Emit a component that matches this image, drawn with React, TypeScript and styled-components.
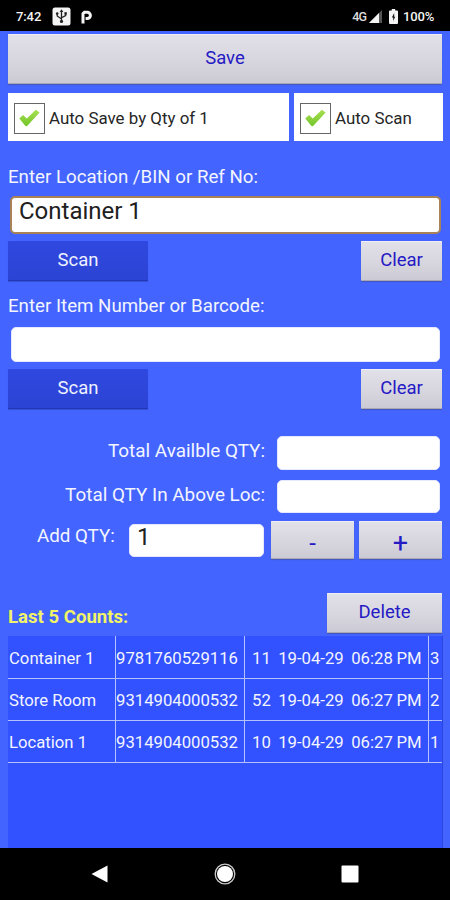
import React from "react";
import styled, { createGlobalStyle } from "styled-components";

const Global = createGlobalStyle`
  *, *::before, *::after { box-sizing: border-box; }
  html, body { margin: 0; padding: 0; background: #4364ff; }
  body { font-family: Roboto, sans-serif; color: #f3f5ff; overflow: hidden; }
`;

const Screen = styled.div`
  width: 450px;
  height: 900px;
  display: flex;
  flex-direction: column;
  background: #4364ff;
`;

const StatusBar = styled.header`
  height: 31px;
  flex: none;
  display: flex;
  align-items: center;
  justify-content: space-between;
  padding: 2px 15px 0 16px;
  background: #000;
  color: #f4f4f4;
  font-size: 13px;
  line-height: 16px;
`;

const StatusGroup = styled.div<{ $gap: number }>`
  display: flex;
  align-items: center;
  gap: ${(p) => p.$gap}px;
`;

const Clock = styled.span`
  width: 26px;
  font-weight: 500;
  letter-spacing: -0.1px;
  white-space: nowrap;
`;

const Network = styled.span`
  font-size: 12.5px;
  font-weight: 500;
  letter-spacing: -0.9px;
  color: #ddd;
  margin-right: 1px;
`;

const Battery = styled.span`
  width: 32px;
  font-weight: 500;
  letter-spacing: -0.1px;
  margin-left: 1px;
`;

const Main = styled.main`
  height: 817px;
  flex: none;
  display: flex;
  flex-direction: column;
  padding: 3px 7px 0 8px;
`;

const Button = styled.button<{ $w: number; $h: number; $primary?: boolean; $size?: number; $drop?: number }>`
  width: ${(p) => p.$w}px;
  height: ${(p) => p.$h}px;
  flex: none;
  border: 0;
  border-radius: 1px;
  padding: ${(p) => p.$drop ?? 0}px 0 ${(p) => (p.$drop ? 0 : 2)}px;
  font-family: inherit;
  font-size: ${(p) => p.$size ?? 18.5}px;
  line-height: 22px;
  color: ${(p) => (p.$primary ? "#eef1ff" : "#2519c4")};
  background: ${(p) =>
    p.$primary
      ? "linear-gradient(#3048df, #2b44d4)"
      : "linear-gradient(#e2e1ea, #d6d5de 60%, #cbcad4)"};
  box-shadow: ${(p) =>
    p.$primary
      ? "inset 0 -1px 0 #2236b4, 0 1px 1px rgba(30, 50, 160, 0.4)"
      : "inset 0 1px 0 #efeef6, inset 0 -1px 0 #a9a7b4, 0 1px 1px rgba(70, 70, 100, 0.45)"};
`;

const CheckRow = styled.div`
  display: flex;
  gap: 5px;
  margin-top: 9px;
`;

const CheckCard = styled.label<{ $w: number }>`
  width: ${(p) => p.$w}px;
  height: 48px;
  display: flex;
  align-items: center;
  gap: 4px;
  padding: 2px 0 0 6px;
  background: #fff;
  color: #262626;
  font-size: 16.9px;
  white-space: nowrap;
`;

const CheckBox = styled.span`
  width: 31px;
  height: 31px;
  flex: none;
  display: flex;
  align-items: center;
  justify-content: center;
  border: 1px solid #666;
  background: #fff;
`;

const Label = styled.div<{ $top: number }>`
  height: 22px;
  margin-top: ${(p) => p.$top}px;
  font-size: 18.7px;
  line-height: 22px;
  white-space: nowrap;
`;

const Field = styled.input<{ $w: number; $h: number; $active?: boolean }>`
  width: ${(p) => p.$w}px;
  height: ${(p) => p.$h}px;
  flex: none;
  display: block;
  border: ${(p) => (p.$active ? "2px solid #a98258" : "1px solid #e5e8ff")};
  border-radius: 5px;
  padding: 0 7px ${(p) => (p.$active ? 8 : 6)}px;
  background: #fff;
  color: #202020;
  font-family: inherit;
  font-size: 24px;
  line-height: 26px;
  outline: none;
`;

const FieldWrap = styled.div<{ $top: number; $left: number }>`
  padding-left: ${(p) => p.$left}px;
  margin-top: ${(p) => p.$top}px;
`;

const ActionRow = styled.div<{ $top: number }>`
  display: flex;
  justify-content: space-between;
  margin-top: ${(p) => p.$top}px;
  padding-right: 1px;
`;

const QtyRow = styled.div<{ $top: number }>`
  display: flex;
  align-items: center;
  justify-content: flex-end;
  gap: 12px;
  margin-top: ${(p) => p.$top}px;
  padding-right: 3px;
  font-size: 18.9px;
  line-height: 22px;
`;

const QtyLabel = styled.span`
  padding-bottom: 4px;
  white-space: nowrap;
`;

const AddRow = styled.div`
  display: flex;
  align-items: center;
  margin-top: 8px;
  padding-left: 29px;
  font-size: 18.8px;
  line-height: 22px;
`;

const AddLabel = styled.span`
  width: 92px;
  padding-bottom: 8px;
  white-space: nowrap;
`;

const Stepper = styled.div`
  display: flex;
  gap: 5px;
  margin-left: 7px;
`;

const CountsHead = styled.div`
  display: flex;
  justify-content: space-between;
  align-items: flex-end;
  margin-top: 34px;
  padding-right: 1px;
`;

const CountsTitle = styled.h2`
  margin: 0 0 5px;
  font-size: 18.6px;
  line-height: 22px;
  font-weight: 700;
  color: #f1f466;
`;

const CountsPanel = styled.section`
  flex: 1;
  margin-top: 3px;
  background: #3251ff;
  border-right: 1px solid #2b46dc;
`;

const CountsRow = styled.div`
  display: grid;
  grid-template-columns: 107px 129px 184px 14px;
  height: 42px;
  border-bottom: 1px solid #b4c2ff;
  font-size: 16.7px;
  line-height: 20px;

  &:first-child {
    height: 43px;
  }
`;

const Cell = styled.div<{ $left: number; $line?: boolean; $word?: number }>`
  display: flex;
  align-items: center;
  padding: 3px 0 0 ${(p) => p.$left}px;
  border-left: ${(p) => (p.$line ? "1px solid #b4c2ff" : "0")};
  word-spacing: ${(p) => p.$word ?? 0}px;
  white-space: pre;
`;

const NavBar = styled.footer`
  height: 52px;
  flex: none;
  display: flex;
  align-items: center;
  justify-content: space-between;
  padding: 0 91px;
  background: #000;
`;

const UsbIcon = () => (
  <svg width="19" height="19" viewBox="0 0 19 19">
    <rect x="0.5" y="0.5" width="18" height="18" rx="2.5" fill="#f4f4f4" />
    <path d="M9.5 3.5V14M9.5 12L5.2 9V6.5M9.5 10.8L13.6 8.5V6" fill="none" stroke="#222" strokeWidth="1.3" />
    <path d="M7.7 5L9.5 2.2 11.3 5z" fill="#222" />
    <circle cx="5.2" cy="6.6" r="1.3" fill="#222" />
    <rect x="12.4" y="5.2" width="2.4" height="2.4" fill="#222" />
    <circle cx="9.5" cy="14.4" r="1.6" fill="#222" />
  </svg>
);

const ParkingIcon = () => (
  <svg width="12" height="14" viewBox="0 0 12 14">
    <path d="M2 13.5V3.6L3.4 2.3H6.3A3.1 3.1 0 0 1 6.3 8.5H4.6" fill="none" stroke="#f4f4f4" strokeWidth="3" />
  </svg>
);

const SignalIcon = () => (
  <svg width="13" height="13" viewBox="0 0 13 13">
    <path d="M0 13L13 0V13z" fill="#555" />
    <path d="M0 13L10 3V13z" fill="#f4f4f4" />
  </svg>
);

const BatteryIcon = () => (
  <svg width="9" height="15" viewBox="0 0 9 15">
    <path d="M2.8 0H6.2V1.5H8Q9 1.5 9 2.5V14Q9 15 8 15H1Q0 15 0 14V2.5Q0 1.5 1 1.5H2.8z" fill="#f4f4f4" />
    <path d="M5.2 4L2.9 8.6H4.2V12L6.2 7.8H5.2z" fill="#111" />
  </svg>
);

const TickIcon = () => (
  <svg width="21" height="18" viewBox="0 0 21 18">
    <defs>
      <linearGradient id="tick" x1="0" y1="0" x2="0" y2="1">
        <stop offset="0" stopColor="#a8df50" />
        <stop offset="1" stopColor="#73c62c" />
      </linearGradient>
    </defs>
    <path d="M0.3 9.6L4 6L7.8 9.4L16.8 0.8L20.6 3.6L8.6 16.6Q7.2 17.8 6 16.6Z" fill="url(#tick)" />
  </svg>
);

const BackIcon = () => (
  <svg width="17" height="18" viewBox="0 0 17 18">
    <path d="M0.5 9L16.5 0.5V17.5z" fill="#fff" />
  </svg>
);

const HomeIcon = () => (
  <svg width="22" height="22" viewBox="0 0 22 22">
    <circle cx="11" cy="11" r="9.8" fill="none" stroke="#ccc" strokeWidth="1.3" />
    <circle cx="11" cy="11" r="8" fill="#fff" />
  </svg>
);

const RecentIcon = () => (
  <svg width="18" height="18" viewBox="0 0 18 18">
    <rect x="0.5" y="0.5" width="17" height="17" rx="1" fill="#fff" />
  </svg>
);

const COUNTS = [
  { place: "Container 1", code: "9781760529116", qty: "11", date: "19-04-29", time: "06:28 PM", id: "3" },
  { place: "Store Room", code: "9314904000532", qty: "52", date: "19-04-29", time: "06:27 PM", id: "2" },
  { place: "Location 1", code: "9314904000532", qty: "10", date: "19-04-29", time: "06:27 PM", id: "1" },
];

export default function App() {
  return (
    <>
      <Global />
      <Screen>
        <StatusBar>
          <StatusGroup $gap={10}>
            <Clock>7:42</Clock>
            <UsbIcon />
            <ParkingIcon />
          </StatusGroup>
          <StatusGroup $gap={7}>
            <StatusGroup $gap={2}>
              <Network>4G</Network>
              <SignalIcon />
            </StatusGroup>
            <StatusGroup $gap={4}>
              <BatteryIcon />
              <Battery>100%</Battery>
            </StatusGroup>
          </StatusGroup>
        </StatusBar>

        <Main>
          <Button $w={434} $h={50}>Save</Button>
          <CheckRow>
            <CheckCard $w={281}>
              <CheckBox><TickIcon /></CheckBox>
              Auto Save by Qty of 1
            </CheckCard>
            <CheckCard $w={149}>
              <CheckBox><TickIcon /></CheckBox>
              Auto Scan
            </CheckCard>
          </CheckRow>

          <Label $top={25}>Enter Location /BIN or Ref No:</Label>
          <FieldWrap $top={8} $left={2}>
            <Field $w={431} $h={38} $active defaultValue="Container 1" />
          </FieldWrap>
          <ActionRow $top={7}>
            <Button $w={140} $h={40} $primary>Scan</Button>
            <Button $w={81} $h={40}>Clear</Button>
          </ActionRow>

          <Label $top={14}>Enter Item Number or Barcode:</Label>
          <FieldWrap $top={10} $left={3}>
            <Field $w={429} $h={35} />
          </FieldWrap>
          <ActionRow $top={7}>
            <Button $w={140} $h={40} $primary>Scan</Button>
            <Button $w={81} $h={40}>Clear</Button>
          </ActionRow>

          <QtyRow $top={27}>
            <QtyLabel>Total Availble QTY:</QtyLabel>
            <Field $w={163} $h={34} />
          </QtyRow>
          <QtyRow $top={10}>
            <QtyLabel>Total QTY In Above Loc:</QtyLabel>
            <Field $w={163} $h={33} />
          </QtyRow>
          <AddRow>
            <AddLabel>Add QTY:</AddLabel>
            <Field $w={135} $h={33} defaultValue="1" />
            <Stepper>
              <Button $w={83} $h={38} $size={24} $drop={6}>-</Button>
              <Button $w={83} $h={38} $size={27} $drop={6}>+</Button>
            </Stepper>
          </AddRow>

          <CountsHead>
            <CountsTitle>Last 5 Counts:</CountsTitle>
            <Button $w={115} $h={40}>Delete</Button>
          </CountsHead>
          <CountsPanel>
            {COUNTS.map((row) => (
              <CountsRow key={row.id}>
                <Cell $left={1}>{row.place}</Cell>
                <Cell $left={0} $line>{row.code}</Cell>
                <Cell $left={7} $line $word={-0.4}>{`${row.qty}  ${row.date}  ${row.time}`}</Cell>
                <Cell $left={1} $line>{row.id}</Cell>
              </CountsRow>
            ))}
          </CountsPanel>
        </Main>

        <NavBar>
          <BackIcon />
          <HomeIcon />
          <RecentIcon />
        </NavBar>
      </Screen>
    </>
  );
}
